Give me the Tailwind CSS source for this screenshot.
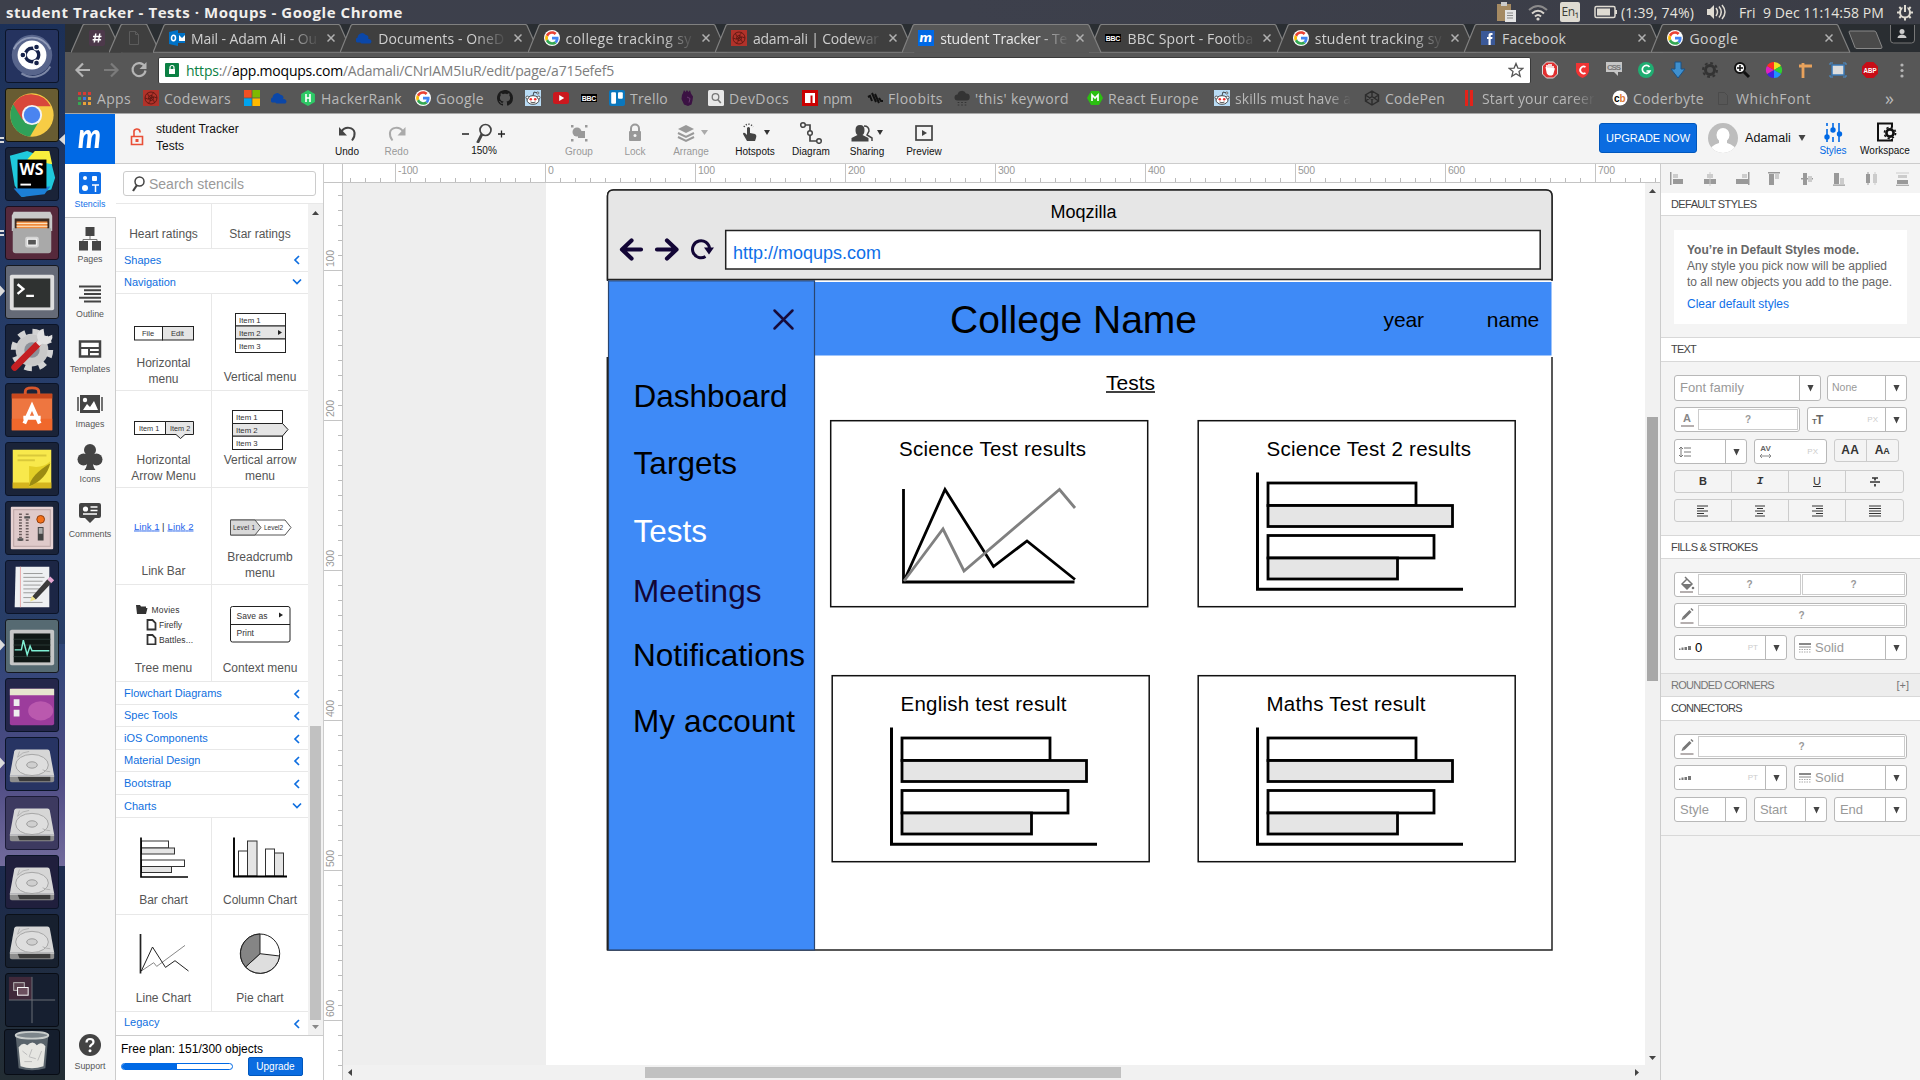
<!DOCTYPE html>
<html lang="en">
<head>
<meta charset="utf-8">
<title>student Tracker - Tests · Moqups</title>
<script src="https://cdn.jsdelivr.net/npm/@tailwindcss/browser@4"></script>
</head>
<body class="w-[1920px] h-[1080px] overflow-hidden flex flex-col bg-white font-['Liberation_Sans',Arial,sans-serif] text-black">

<!-- shared symbols -->
<svg class="hidden">
  <symbol id="i-google" viewBox="-4 -4 56 56"><circle cx="24" cy="24" r="28" fill="#fff"/><path fill="#EA4335" d="M24 9.5c3.54 0 6.71 1.22 9.21 3.6l6.85-6.85C35.9 2.38 30.47 0 24 0 14.62 0 6.51 5.38 2.56 13.22l7.98 6.19C12.43 13.72 17.74 9.5 24 9.5z"/><path fill="#4285F4" d="M46.98 24.55c0-1.57-.15-3.09-.38-4.55H24v9.02h12.94c-.58 2.96-2.26 5.48-4.78 7.18l7.73 6c4.51-4.18 7.09-10.36 7.09-17.65z"/><path fill="#FBBC05" d="M10.53 28.59c-.48-1.45-.76-2.99-.76-4.59s.27-3.14.76-4.59l-7.98-6.19C.92 16.46 0 20.12 0 24c0 3.88.92 7.54 2.56 10.78l7.97-6.19z"/><path fill="#34A853" d="M24 48c6.48 0 11.93-2.13 15.89-5.81l-7.73-6c-2.15 1.45-4.92 2.3-8.16 2.3-6.26 0-11.57-4.22-13.47-9.91l-7.98 6.19C6.51 42.62 14.62 48 24 48z"/></symbol>
  <symbol id="i-cloud" viewBox="0 0 16 16"><path fill="#0b47a8" d="M1 12.5a2.8 2.8 0 0 1 .6-5 4.500 4.500 0 0 1 7.900-2.800 3.600 3.600 0 0 1 3 3.800H8A3.500 3.500 0 0 0 4.500 12.500zM5.500 13.500a2.200 2.200 0 0 1 .5-4.200 3.400 3.400 0 0 1 6.300-.3 2.500 2.500 0 0 1 2 4.500z"/></symbol>
  <symbol id="i-codewars" viewBox="0 0 16 16"><rect width="16" height="16" fill="#b1322a"/><g fill="none" stroke="#5d1712" stroke-width=".9"><path d="M8 8q0-4 3-5.500M8 8q3.500-2 6 0M8 8q3.500 2 3.500 5M8 8q0 4-3 5.500M8 8q-3.500 2-6 0M8 8q-3.500-2-3.500-5"/><circle cx="8" cy="8" r="6"/><circle cx="8" cy="8" r="2.500"/></g></symbol>
  <symbol id="i-bbc" viewBox="0 0 16 16"><rect y="4" width="16" height="8" fill="#000"/><text x="0.800" y="11" font-size="7" font-weight="bold" fill="#fff" textLength="14.500" font-family="Liberation Sans">BBC</text></symbol>
  <symbol id="i-outlook" viewBox="0 0 16 16"><path fill="#0072c6" d="M0 2l9-2v16l-9-2z"/><path fill="#0072c6" d="M9 3h7v10H9z"/><path d="M10 5l3 3 3-3v6h-6z" fill="#fff"/><ellipse cx="4.500" cy="8" rx="2" ry="2.700" fill="none" stroke="#fff" stroke-width="1.500"/></symbol>
  <symbol id="i-moqups" viewBox="0 0 16 16"><rect width="16" height="16" fill="#0069e5"/><text x="1.500" y="12" font-size="14" font-weight="900" font-style="italic" fill="#fff" textLength="12.500" lengthAdjust="spacingAndGlyphs" font-family="Lato">m</text></symbol>
  <symbol id="i-facebook" viewBox="0 0 16 16"><rect x="1" y="1" width="14" height="14" fill="#3b5998"/><path fill="#fff" d="M8.500 15V9H7V7h1.500V5.500C8.500 3.700 9.500 3 11 3h1.500v2h-1c-.6 0-.8.3-.8.8V7h1.800l-.3 2h-1.500v6z"/></symbol>
  <symbol id="i-slack" viewBox="0 0 16 16"><rect width="16" height="16" rx="2" fill="#4d394b"/><path d="M6.800 3.500l-1.500 9M10.800 3.500l-1.500 9M4 6.500h8.500M3.600 9.800h8.500" stroke="#fff" stroke-width="1.500"/></symbol>
  <symbol id="i-page" viewBox="0 0 16 16"><path d="M3.500 1.500h6l3 3v10h-9zM9.500 1.500v3h3" fill="none" stroke="#5c5c5c"/></symbol>
  <symbol id="i-apps" viewBox="0 0 16 16"><path d="M2 2h3v3H2z M7 2h3v3H7z M12 2h3v3h-3z" fill="#d93a34"/><path d="M2 7h3v3H2z" fill="#36a852"/><path d="M7 7h3v3H7z" fill="#3b78e7"/><path d="M12 7h3v3h-3z" fill="#e8a13a"/><path d="M2 12h3v3H2z" fill="#36a852"/><path d="M7 12h3v3H7z" fill="#e8a13a"/><path d="M12 12h3v3h-3z" fill="#e8a13a"/></symbol>
  <symbol id="i-ms" viewBox="0 0 16 16"><path fill="#f25022" d="M0 0h7.600v7.600H0z"/><path fill="#7fba00" d="M8.400 0H16v7.600H8.400z"/><path fill="#00a4ef" d="M0 8.400h7.600V16H0z"/><path fill="#ffb900" d="M8.400 8.400H16V16H8.400z"/></symbol>
  <symbol id="i-hr" viewBox="0 0 16 16"><path fill="#2ec866" d="M8 0l6.900 4v8L8 16l-6.900-4V4z"/><path d="M6 4v8M10 4v8M6 8h4" stroke="#fff" stroke-width="1.600"/></symbol>
  <symbol id="i-github" viewBox="0 0 16 16"><path fill="#1b1b1b" d="M8 0C3.580 0 0 3.580 0 8c0 3.540 2.290 6.530 5.470 7.590.4.070.55-.17.55-.38 0-.19-.01-.82-.01-1.490-2.010.37-2.530-.49-2.690-.94-.09-.23-.48-.94-.82-1.130-.28-.15-.68-.52-.01-.53.63-.01 1.080.58 1.230.82.72 1.210 1.870.87 2.330.66.070-.52.28-.87.51-1.070-1.780-.2-3.640-.89-3.640-3.950 0-.87.31-1.590.82-2.150-.08-.2-.36-1.020.08-2.120 0 0 .67-.21 2.200.82.64-.18 1.320-.27 2-.27.68 0 1.360.09 2 .27 1.530-1.040 2.200-.82 2.200-.82.44 1.100.16 1.920.08 2.120.51.56.82 1.270.82 2.150 0 3.070-1.870 3.750-3.650 3.950.29.25.54.73.54 1.480 0 1.070-.01 1.930-.01 2.200 0 .21.15.46.55.38A8.013 8.013 0 0016 8c0-4.420-3.580-8-8-8z"/></symbol>
  <symbol id="i-reddit" viewBox="0 0 16 16"><rect width="16" height="16" fill="#b9dcf5"/><ellipse cx="8" cy="10" rx="6" ry="4.300" fill="#fff" stroke="#222" stroke-width=".8"/><circle cx="2.300" cy="7.500" r="1.400" fill="#fff" stroke="#222" stroke-width=".7"/><circle cx="13.700" cy="7.500" r="1.400" fill="#fff" stroke="#222" stroke-width=".7"/><circle cx="5.800" cy="9.300" r="1.300" fill="#e33"/><circle cx="10.200" cy="9.300" r="1.300" fill="#e33"/><path d="M5.500 12q2.500 1.500 5 0M8 5.500L9 2l3 .8" fill="none" stroke="#222" stroke-width=".8"/><circle cx="12.800" cy="3" r="1.100" fill="#fff" stroke="#222" stroke-width=".6"/></symbol>
  <symbol id="i-yt" viewBox="0 0 16 16"><rect y="2" width="16" height="12" rx="2.500" fill="#cc181e"/><path d="M6.200 5v6l5-3z" fill="#fff"/></symbol>
  <symbol id="i-trello" viewBox="0 0 16 16"><rect width="16" height="16" rx="2" fill="#0a77bd"/><rect x="2.200" y="2.200" width="4.800" height="11.500" rx="1" fill="#fff"/><rect x="9" y="2.200" width="4.800" height="6.500" rx="1" fill="#fff"/></symbol>
  <symbol id="i-pl" viewBox="0 0 16 16"><path fill="#3b1243" d="M3 3l1-3 1.500 2L7 0l1.300 2L10 .3l1 3.200 2 3-.5 4-1 4L8 16l-4-1.500L1.500 9 2 5z"/><path d="M7 7l3 1.500-1 4" stroke="#6b3a72" fill="none"/></symbol>
  <symbol id="i-devdocs" viewBox="0 0 16 16"><rect width="16" height="16" rx="1.500" fill="#e8e8e8"/><circle cx="7.500" cy="7" r="3.300" fill="none" stroke="#777" stroke-width="1.300"/><path d="M9.800 9.500l3 3.500" stroke="#777" stroke-width="1.600"/></symbol>
  <symbol id="i-npm" viewBox="0 0 16 16"><rect width="16" height="16" fill="#cb0000"/><path d="M3 3h10v10h-2.500V5.500h-2V13H3z" fill="#fff"/></symbol>
  <symbol id="i-floo" viewBox="0 0 16 16"><path d="M1 7l2-1 2 5M5 3l4 9M8 4l4 9M12 8l2 3 2 0" stroke="#111" stroke-width="2" fill="none"/></symbol>
  <symbol id="i-rain" viewBox="0 0 16 16"><path fill="#343434" d="M3.500 10.500a3 3 0 0 1 0-6A4.500 4.500 0 0 1 12 3.500a3.500 3.500 0 0 1 .5 7z"/><path d="M4.500 12v1M8 12v1M11.500 12v1M4.500 14.500v1M8 14.500v1M11.500 14.500v1" stroke="#343434" stroke-width="1.600"/></symbol>
  <symbol id="i-react" viewBox="0 0 16 16"><path fill="#2cbf12" d="M4 1h8l4 7-4 7H4L0 8z"/><path d="M5 11V5l3 3 3-3v6" fill="none" stroke="#fff" stroke-width="1.700"/></symbol>
  <symbol id="i-codepen" viewBox="0 0 16 16"><path d="M8 1l6.500 4v6L8 15l-6.500-4V5zM1.500 5L8 9.500 14.500 5M1.500 11L8 6.500l6.500 4.500M8 1v5.500M8 9.500V15" fill="none" stroke="#2c2c2c" stroke-width="1.400"/></symbol>
  <symbol id="i-red2" viewBox="0 0 16 16"><path d="M5.500 0v16M10.500 0v16" stroke="#e2231a" stroke-width="3"/></symbol>
  <symbol id="i-cb" viewBox="0 0 16 16"><circle cx="8" cy="8" r="7.500" fill="#fff"/><text x="2" y="11.500" font-size="10" font-weight="bold" font-family="Liberation Sans" textLength="6">c</text><text x="7.500" y="11.500" font-size="10" font-weight="bold" fill="#e07b39" font-family="Liberation Sans">b</text></symbol>
  <symbol id="i-none" viewBox="0 0 16 16"><path d="M3.500 2.500h6l3 3v9h-9z" fill="none" stroke="#4b4b4b"/></symbol>
  <symbol id="disk" viewBox="0 0 54 54"><path d="M11 12h32q2 0 2.500 2l4.500 25H4l4.500-25Q9 12 11 12z" fill="#d6d6d6"/><path d="M4 39h46v5q0 2-2 2H6q-2 0-2-2z" fill="#8e8e8e"/><path d="M12 40h34v5H14z" fill="#3b3b3b"/><path d="M4 39.500h46" stroke="#f5f5f5"/><ellipse cx="27" cy="28" rx="17" ry="11" fill="#dedede" stroke="#a3a3a3"/><ellipse cx="27" cy="28" rx="5.500" ry="3.300" fill="#cfcfcf" stroke="#999"/><path d="M14 14l-2 6q5-6 12-6M38 33q4 2 8 2" stroke="#b2b2b2" fill="none"/></symbol>
  <symbol id="chev-l" viewBox="0 0 8 10"><path d="M6 1L2 5l4 4" fill="none" stroke="#0f6fe0" stroke-width="1.700"/></symbol>
  <symbol id="chev-d" viewBox="0 0 10 8"><path d="M1 1.500l4 4 4-4" fill="none" stroke="#0f6fe0" stroke-width="1.700"/></symbol>
  <symbol id="caret" viewBox="0 0 8 8"><path d="M.5.500h7L4 8z" fill="#444"/></symbol>
  <symbol id="bars" viewBox="1255 470 212 122" overflow="visible">
    <g stroke="#000" stroke-width="2.800"><rect x="1268" y="483" width="148" height="22.500" fill="#fff"/><rect x="1268" y="505.500" width="184.500" height="21" fill="#e5e5e5"/><rect x="1268" y="535.500" width="166" height="22.500" fill="#fff"/><rect x="1268" y="558" width="129.500" height="21" fill="#e5e5e5"/><path d="M1257.500 472.500v116.800h205.500" fill="none" stroke-width="3"/></g>
  </symbol>
</svg>

<!-- system bar -->
<div class="h-6 shrink-0 flex items-center bg-linear-to-r from-[#3d404b] via-[#3d404c] to-[#3b3d46] text-[#e6e3de] font-['Open_Sans','Noto_Sans',sans-serif] text-[14px]">
  <div class="pl-1.5 w-[1496px]"><span class="font-bold text-[15px] text-[#f1efec] whitespace-nowrap" data-w="397">student Tracker - Tests · Moqups - Google Chrome</span></div>
  <svg class="w-5 h-5 mr-3" viewBox="0 0 20 20"><path d="M1 2h14v17H1z" fill="#a58a62"/><path d="M5 0h6v4H5z" fill="#ccc"/><path d="M9 8h11v12H9z" fill="#e4e4e4"/><path d="M11 11h6M11 13.500h6M11 16h6" stroke="#888"/></svg>
  <svg class="w-5 h-5 mr-3" viewBox="0 0 20 20"><g fill="none" stroke="#d9d5ce" stroke-width="2"><path d="M1 8q9-8 18 0" opacity=".5"/><path d="M4 11.500q6-5.500 12 0"/><path d="M7 14.500q3-3 6 0"/></g><circle cx="10" cy="17" r="1.600" fill="#d9d5ce"/></svg>
  <div class="w-5 h-5 mr-3.5 rounded-xs bg-[#dfdbd2] text-[#3c3b37] text-[12px] leading-5 text-center whitespace-nowrap"><span data-w="17">En₁</span></div>
  <svg class="w-6 h-4 mr-[3px]" viewBox="0 0 24 16"><rect x="1" y="2.500" width="20" height="11" rx="1.500" fill="none" stroke="#dfdbd2" stroke-width="1.500"/><rect x="3" y="4.500" width="13" height="7" fill="#dfdbd2"/><path d="M22 6v4" stroke="#dfdbd2" stroke-width="2"/></svg>
  <div class="w-[86px] whitespace-nowrap"><span data-w="73">(1:39, 74%)</span></div>
  <svg class="w-5 h-5 mr-3" viewBox="0 0 20 20"><path d="M0 7h3l4-4v14l-4-4H0z" fill="#dfdbd2"/><g fill="none" stroke="#dfdbd2" stroke-width="1.500"><path d="M9 6q3 4 0 8M12 4.500q4.500 5.500 0 11M15 3q6 7 0 14"/></g></svg>
  <div class="w-[157px] whitespace-nowrap"><span data-w="145">Fri&nbsp; 9 Dec 11:14:58 PM</span></div>
  <svg class="w-[18px] h-[18px]" viewBox="0 0 18 18"><circle cx="9" cy="9.500" r="5" fill="none" stroke="#dfdbd2" stroke-width="2"/><path d="M9 1v8" stroke="#3d404b" stroke-width="5"/><path d="M9 2v7" stroke="#dfdbd2" stroke-width="2"/><path d="M1 9.500h3M14 9.500h3M9 15v2.500M3.300 4l2 2M14.700 4l-2 2M3.300 15l2-2M14.700 15l-2-2" stroke="#dfdbd2" stroke-width="2"/></svg>
</div>

<div class="flex h-[1056px]">
<!-- launcher -->
<aside class="w-[65px] shrink-0 pt-[5px] flex flex-col items-center gap-[5px] bg-linear-to-b from-[#1c3057] via-[#2b4270] via-45% to-[#1c2c45] pr-[1px] relative">
  <div class="absolute inset-x-0 top-[620px] h-[222px] bg-linear-to-b from-[#2e4577] via-[#4f4c84] via-60% to-[#726b9c]"></div>
  <div class="absolute inset-x-0 top-[842px] bottom-0 bg-linear-to-b from-[#1d2b4f] to-[#232d33]"></div>
  <svg class="absolute left-0 top-0 w-[65px] h-[1056px]" viewBox="0 24 65 1056"><g fill="#dcdcdc"><path d="M0 138h4M0 142h4M0 231h4M0 235h4" stroke="#dcdcdc" stroke-width="2"/><path d="M65 134v11l-6-5.500zM0 285.500v11l5-5.500zM0 639.500v11l5-5.500zM0 757.500v11l5-5.500z"/></g></svg>
  <div class="relative w-[54px] h-[54px] shrink-0 rounded-[3px] border border-[#0b1428] bg-[#25335f] flex"><svg viewBox="0 0 54 54"><circle cx="27" cy="26" r="21" fill="#6d7aa0" opacity=".7"/><path d="M8 20a21 21 0 0 1 38 0M46 38a21 21 0 0 1-30 7" stroke="#b7bfd6" stroke-width="2" fill="none" opacity=".6"/><circle cx="27" cy="26" r="15" fill="#fff"/><circle cx="27" cy="26" r="7" fill="none" stroke="#16224a" stroke-width="3.500"/><g fill="#16224a" stroke="#fff" stroke-width="1.200"><circle cx="17.500" cy="26" r="3"/><circle cx="31.700" cy="17.700" r="3"/><circle cx="31.700" cy="34.300" r="3"/></g></svg></div>
  <div class="relative w-[54px] h-[54px] shrink-0 rounded-[3px] border border-[#14140c] bg-[#685c32] flex"><svg viewBox="0 0 54 54"><circle cx="27" cy="27" r="22.500" fill="#f7cc45"/><path d="M27 27L7.500 15.800A22.500 22.500 0 0 0 25 49.400L34 34z" fill="#2fa159"/><path d="M27 18h19.500A22.500 22.500 0 0 0 7.500 15.800L17 32z" fill="#d8473b"/><circle cx="27" cy="27" r="10.500" fill="#f3f3f3"/><circle cx="27" cy="27" r="8.500" fill="#4a84f0"/></svg></div>
  <div class="relative w-[54px] h-[54px] shrink-0 rounded-[3px] border border-[#0b1428] bg-[#1a2338] flex"><svg viewBox="0 0 54 54"><path d="M4 8l18-5 8 3 14-3 7 28-4 12-30 8-8-12z" fill="#1fc9dc"/><path d="M22 12L30 3l15 0 3 14z" fill="#f7ee3d"/><path d="M8 42l8 9 24-3 6-8z" fill="#1c7fd6"/><rect x="12" y="12" width="30" height="30" fill="#000"/><path d="M15 38h11" stroke="#fff" stroke-width="2"/><text x="14" y="28" font-size="16" font-weight="bold" fill="#fff" textLength="25" lengthAdjust="spacingAndGlyphs" font-family="Open Sans">WS</text></svg></div>
  <div class="relative w-[54px] h-[54px] shrink-0 rounded-[3px] border border-[#1b1020] bg-[#56293b] flex"><svg viewBox="0 0 54 54"><path d="M8 5h38l2 4v16H6V9z" fill="#c9c9c9"/><path d="M9 12h36v14H9z" fill="#3a2a22"/><path d="M11 15h32v9H11z" fill="#f08b3d"/><path d="M11 17h32M11 20h32" stroke="#fff3da"/><path d="M7 22h40v23q0 3-3 3H10q-3 0-3-3z" fill="#a9a9a9"/><rect x="20" y="31" width="14" height="11" rx="2" fill="#d5d5d5"/><rect x="22.500" y="33.500" width="9" height="6" fill="#555" stroke="#fff"/></svg></div>
  <div class="relative w-[54px] h-[54px] shrink-0 rounded-[3px] border border-[#15181f] bg-[#656a77] flex"><svg viewBox="0 0 54 54"><rect x="4" y="9" width="46" height="37" rx="2" fill="#dedede"/><rect x="8" y="13" width="38" height="30" fill="#2f3231"/><path d="M12 19l6 5-6 5M21 31h8" fill="none" stroke="#fff" stroke-width="2.500"/></svg></div>
  <div class="relative w-[54px] h-[54px] shrink-0 rounded-[3px] border border-[#0b1428] bg-[#1a2338] flex"><svg viewBox="0 0 54 54"><circle cx="27" cy="26" r="17" fill="#c9c9c9"/><circle cx="27" cy="26" r="19" fill="none" stroke="#d3d3d3" stroke-width="6" stroke-dasharray="7.500 7.400"/><circle cx="27" cy="26" r="8" fill="#8c9098"/><path d="M9 44L32 21" stroke="#c41f22" stroke-width="7" stroke-linecap="round"/><path d="M33 20l6-6" stroke="#e6e6e6" stroke-width="5"/><path d="M48 10a8 8 0 1 1-9-6l1 7 4 1z" fill="#e2e2e2"/></svg></div>
  <div class="relative w-[54px] h-[54px] shrink-0 rounded-[3px] border border-[#0b1428] bg-[#1a2338] flex"><svg viewBox="0 0 54 54"><path d="M20 14V8q0-4 7-4t7 4v6" fill="none" stroke="#d9572c" stroke-width="3"/><path d="M6 10h42v38H6z" fill="#ee7640"/><path d="M6 10h42v5H6z" fill="#c9481d"/><path d="M6 36h42v12H6z" fill="#f0682c"/><path d="M19 41l8-18 8 18M18 35h18" fill="none" stroke="#fff" stroke-width="4"/></svg></div>
  <div class="relative w-[54px] h-[54px] shrink-0 rounded-[3px] border border-[#0b1428] bg-[#1a2338] flex"><svg viewBox="0 0 54 54"><path d="M7 7h40v40H7z" fill="#f8e94c"/><path d="M7 41h40v6H7z" fill="#d5b51e"/><path d="M12 13h30M12 18h18" stroke="#d9c93a" stroke-width="2"/><path d="M24 46V24q14 3 22-5Q42 36 24 46z" fill="#e4cf27"/><path d="M24 45q2-12 22-24Q42 38 24 45z" fill="#9c8b12"/></svg></div>
  <div class="relative w-[54px] h-[54px] shrink-0 rounded-[3px] border border-[#0b1428] bg-[#1a2338] flex"><svg viewBox="0 0 54 54"><rect x="5" y="5" width="44" height="44" rx="1" fill="#e6d2d2"/><rect x="8" y="8" width="38" height="38" fill="#dfcaca" stroke="#b9a3a3"/><path d="M15 12v30M22 12v30" stroke="#6a5c5c" stroke-dasharray="1.500 1.500" stroke-width="3"/><path d="M12 39h6M19 16h6" stroke="#555" stroke-width="2.500"/><circle cx="36" cy="18" r="4" fill="#f3711c" stroke="#8b3a0a"/><rect x="33" y="26" width="6" height="14" fill="#444"/><rect x="34" y="27" width="4" height="6" fill="#aaa"/></svg></div>
  <div class="relative w-[54px] h-[54px] shrink-0 rounded-[3px] border border-[#0b1428] bg-[#1c2645] flex"><svg viewBox="0 0 54 54"><path d="M10 6h35v42H9z" fill="#eef0f2"/><path d="M15 6v42" stroke="#e8a9a9"/><path d="M18 13h20M18 17h22M18 21h20M18 25h18M18 29h18M18 33h14M18 38h12M18 43h20" stroke="#999"/><path d="M27 37l16-18 4 4-16 17z" fill="#3b3b3b"/><path d="M43 19l3-3 4 4-3 3z" fill="#e7a9d3"/><path d="M25 42l2-6 4 4z" fill="#efe48c"/></svg></div>
  <div class="relative w-[54px] h-[54px] shrink-0 rounded-[3px] border border-[#15181f] bg-[#566a72] flex"><svg viewBox="0 0 54 54"><rect x="4" y="10" width="46" height="37" rx="2" fill="#c6c6c6"/><rect x="8" y="14" width="38" height="30" fill="#101816"/><path d="M8 20h38M8 26h38M8 38h38" stroke="#2c3a36"/><path d="M9 31h7l2-10 4 15 3-9 2 5h18" fill="none" stroke="#7ff0d4" stroke-width="1.500"/></svg></div>
  <div class="relative w-[54px] h-[54px] shrink-0 rounded-[3px] border border-[#0b1428] bg-[#24264a] flex"><svg viewBox="0 0 54 54"><rect x="4" y="10" width="46" height="38" rx="2" fill="#9c3c9c"/><ellipse cx="36" cy="33" rx="13" ry="10" fill="#c765b7" opacity=".7"/><path d="M4 10h46v7H4z" fill="#e7e6cf"/><path d="M8 21h6v7H8zM8 32h6v7H8z" fill="#eee"/></svg></div>
  <div class="relative w-[54px] h-[54px] shrink-0 rounded-[3px] border border-[#0b1428] bg-[#273463] flex"><svg><use href="#disk"/></svg></div>
  <div class="relative w-[54px] h-[54px] shrink-0 rounded-[3px] border border-[#1c1c38] bg-[#3d3a60] flex"><svg><use href="#disk"/></svg></div>
  <div class="relative w-[54px] h-[54px] shrink-0 rounded-[3px] border border-[#0b1428] bg-[#201f3d] flex"><svg><use href="#disk"/></svg></div>
  <div class="relative w-[54px] h-[54px] shrink-0 rounded-[3px] border border-[#0b1018] bg-[#17202f] flex"><svg><use href="#disk"/></svg></div>
  <div class="relative w-[54px] h-[54px] shrink-0 rounded-[3px] border border-[#080c14] bg-[#161f30] flex"><svg viewBox="0 0 54 54"><path d="M3 3h24v24H3z" fill="#40293a"/><path d="M3 27h48M27 3v48" stroke="#6c7079"/><rect x="8" y="9" width="11" height="8" fill="#5b4350" stroke="#bbb"/><rect x="12" y="14" width="11" height="8" fill="#6c4f5e" stroke="#fff"/></svg></div>
  <div class="relative w-[56px] h-[46px] -mt-[3px] shrink-0 rounded-[3px] border border-[#080c14] bg-[#151e2d] flex"><svg viewBox="0 0 56 46"><path d="M11 6l3 34q14 4 28 0l3-34z" fill="#59636b"/><path d="M14 18q5-6 9-2 6-6 10 0 5-5 9 1l-2 21q-12 4-24 0z" fill="#e6e6e2"/><path d="M18 22l5 4M28 20l-3 8 7 2M38 22l-4 10M20 33h8" stroke="#bbb" fill="none"/><ellipse cx="28" cy="5.500" rx="17" ry="3.500" fill="#7d868c" stroke="#c8cccb" stroke-width="2"/></svg></div>
</aside>

<main class="flex-1 min-w-0 flex flex-col">
  <!-- browser tabs -->
  <div class="h-[29px] shrink-0 flex bg-[#2a2e32] border-b border-[#575757] font-['Open_Sans','Noto_Sans',sans-serif] text-[14px] text-[#cfcfcf]">
    <div class="flex w-full pl-[6px]" id="tabs"></div>
  </div>

  <!-- address bar -->
  <div class="h-[31px] shrink-0 bg-[#575757] flex items-center pt-[5px] -mt-px">
    <svg class="w-[93px] h-[26px] shrink-0" viewBox="65 58 93 26"><g fill="none" stroke-width="2.200"><path d="M90 71H77M83 64.500L76.500 71l6.500 6.500" stroke="#b5b5b5"/><path d="M104 71h13M111 64.500l6.500 6.500-6.500 6.500" stroke="#7b7b7b"/><path d="M144.500 67a6.500 6.500 0 1 0 1 4.500" stroke="#b5b5b5"/></g><path d="M146.500 63v7h-7z" fill="#b5b5b5"/></svg>
    <div class="w-[1373px] shrink-0 h-[27px] bg-white border border-[#3a3a3a] rounded-xs flex items-center pl-1.5 pr-1.5 font-['Open_Sans','Noto_Sans',sans-serif] text-[14px] text-[#7d7d7d]">
      <svg class="w-3.5 h-3.5 mr-[7px]" viewBox="0 0 14 14"><rect width="14" height="14" rx="1" fill="#0b8043"/><rect x="4" y="6" width="6" height="5" fill="#fff"/><path d="M5 6V4.500a2 2 0 0 1 4 0V6" stroke="#fff" fill="none" stroke-width="1.200"/></svg>
      <span class="whitespace-nowrap" data-w="428"><span class="text-[#0b8043]">https</span>://<span class="text-black">app.moqups.com</span>/Adamali/CNrIAM5IuR/edit/page/a715efef5</span>
      <svg class="w-4 h-4 ml-auto" viewBox="0 0 16 16"><path d="M8 1.500l1.900 4.600 4.900.3-3.800 3.200 1.200 4.800L8 11.700l-4.200 2.700L5 9.600 1.200 6.400l4.900-.3z" fill="none" stroke="#555" stroke-width="1.300"/></svg>
    </div>
    <svg class="w-[389px] h-[26px]" viewBox="1531 58 389 26">
      <g><path d="M1546.500 63h7l4 4v8l-4 4h-7l-4-4v-8z" fill="#e03030" stroke="#ddd"/><path d="M1547 70v-4M1549 70v-5M1551 70v-5M1553 71v-4M1546.500 69l1 5q2 3 5 1l1.500-5z" stroke="#fff" stroke-width="1.600" fill="#fff"/></g>
      <path d="M1576 64h13v8q-1 5-6.500 7-5.500-2-6.500-7z" fill="#f03434"/><path d="M1585.500 68a3.500 3.500 0 1 0 0 6" fill="none" stroke="#fff" stroke-width="1.800"/>
      <path d="M1606 63h16v10h-4v4l-4-4h-8z" fill="#c6c6c6"/><text x="1607" y="71" font-size="8" font-weight="bold" fill="#777" textLength="14" font-family="Liberation Sans">CSS</text>
      <circle cx="1646" cy="71" r="8" fill="#1fae72"/><path d="M1649.500 68a4 4 0 1 0 .5 4h-3.500" fill="none" stroke="#fff" stroke-width="1.700"/>
      <path d="M1675 63h6v7h4l-7 9-7-9h4z" fill="#3f90cf" stroke="#1a5286"/>
      <circle cx="1710" cy="71" r="4.500" fill="none" stroke="#333" stroke-width="3"/><circle cx="1710" cy="71" r="7" fill="none" stroke="#333" stroke-width="2" stroke-dasharray="2.800 2.700"/>
      <circle cx="1740" cy="69" r="5" fill="#fff" stroke="#111" stroke-width="2"/><path d="M1740 66v6M1737 69h6" stroke="#111" stroke-width="1.500"/><path d="M1744 73l5 5" stroke="#111" stroke-width="3"/>
      <g><path d="M1774 71V63a8 8 0 0 1 7 4z" fill="#f0e020"/><path d="M1774 71l7-4a8 8 0 0 1 0 8z" fill="#30d030"/><path d="M1774 71l7 4a8 8 0 0 1-7 4z" fill="#2090ff"/><path d="M1774 71v8a8 8 0 0 1-7-4z" fill="#4020e0"/><path d="M1774 71l-7 4a8 8 0 0 1 0-8z" fill="#e020c0"/><path d="M1774 71l-7-4a8 8 0 0 1 7-4z" fill="#ff3020"/></g>
      <path d="M1799 67h13M1803 64v15" stroke="#e8a25c" stroke-width="2.800"/>
      <rect x="1832" y="66" width="12" height="10" fill="#ddd" stroke="#3a7ab8" stroke-width="1.500"/><path d="M1830 66v-2h3M1846 66v-2h-3M1830 76v2h3M1846 76v2h-3" stroke="#4a90d0" fill="none"/>
      <path d="M1866.500 63h7l4.500 4.500v7l-4.500 4.500h-7l-4.500-4.500v-7z" fill="#c70d17"/><text x="1863.500" y="74" font-size="8" font-weight="bold" fill="#fff" textLength="13" lengthAdjust="spacingAndGlyphs" font-family="Liberation Sans">ABP</text>
      <g fill="#b5b5b5"><circle cx="1902" cy="66" r="1.600"/><circle cx="1902" cy="71.500" r="1.600"/><circle cx="1902" cy="77" r="1.600"/></g>
    </svg>
  </div>

  <!-- bookmarks -->
  <div id="bookmarks" class="h-[31px] shrink-0 bg-[#575757] border-b border-[#a8a8a8] flex items-center pl-[11px] font-['Open_Sans','Noto_Sans',sans-serif] text-[14px] text-[#b9b9b9]"></div>

  <!-- editor header -->
  <header class="h-[50px] shrink-0 bg-[#f4f4f4] border-b border-[#ccc] flex text-[10px] text-[#111]">
    <div class="w-[50px] h-[50px] bg-[#0069e5] grid place-items-center text-white font-['Lato','Liberation_Sans',sans-serif] font-black italic text-[34px] leading-none"><span class="-mt-2 scale-x-[.85]">m</span></div>
    <svg class="w-[14px] h-[18px] ml-[15px] mt-[14px]" viewBox="0 0 14 18"><path d="M1.500 8.500h11v8h-11zM4 8.500V4.500a3 3 0 0 1 6-1v1" fill="none" stroke="#e94f37" stroke-width="1.600"/><rect x="5.500" y="11" width="3" height="3" fill="#e94f37"/></svg>
    <div class="ml-[12px] w-[166px] pt-[7px] text-[12px] leading-[17px] whitespace-nowrap"><div>student Tracker</div><div>Tests</div></div>

    <div class="w-[50px] flex flex-col items-center"><svg class="w-[22px] h-[30px]" viewBox="336 114 22 30"><path d="M341.500 131.500c4-6 12-4 13 1 .5 3-.5 5.500-2.500 8" fill="none" stroke="#444" stroke-width="2"/><path d="M339 127v8.500h8z" fill="#444"/></svg><span class="leading-[15px]">Undo</span></div>
    <div class="w-[49px] flex flex-col items-center text-[#999]"><svg class="w-[22px] h-[30px]" viewBox="336 114 22 30"><path d="M353 131.500c-4-6-12-4-13 1-.5 3 .5 5.500 2.500 8" fill="none" stroke="#aaa" stroke-width="2"/><path d="M355.500 127v8.500h-8z" fill="#aaa"/></svg><span class="leading-[15px]">Redo</span></div>
    <div class="ml-[33px] w-[60px] flex flex-col items-center"><svg class="w-[60px] h-[29px]" viewBox="454 114 60 29"><circle cx="485.500" cy="130" r="5.500" fill="none" stroke="#444" stroke-width="1.700"/><path d="M482 134l-4.500 9" stroke="#444" stroke-width="2.800"/><path d="M462 134h7M498 134h7M501.500 130.500v7" stroke="#222" stroke-width="1.300"/></svg><span class="leading-[15px]">150%</span></div>
    <div class="ml-[37px] w-14 flex flex-col items-center text-[#999]"><svg class="w-5 h-[30px]" viewBox="0 0 20 30"><g fill="#999"><circle cx="8" cy="18" r="4.500"/><rect x="9" y="17" width="7" height="7"/><path d="M2 11h2.500v2.500H2zM16 11h2.500v2.500H16zM2 25h2.500v2.500H2zM16 25h2.500v2.500H16z"/></g></svg><span class="leading-[15px]">Group</span></div>
    <div class="w-14 flex flex-col items-center text-[#999]"><svg class="w-5 h-[30px]" viewBox="0 0 20 30"><rect x="4" y="17" width="12" height="10" rx="1" fill="#999"/><path d="M6 17v-2.500a4 4 0 0 1 8 0V17" fill="none" stroke="#999" stroke-width="2"/><circle cx="10" cy="21.500" r="1.500" fill="#f4f4f4"/></svg><span class="leading-[15px]">Lock</span></div>
    <div class="w-14 flex flex-col items-center text-[#999]"><svg class="w-9 h-[30px]" viewBox="0 0 36 30"><path d="M13 11l8 4-8 4-8-4z" fill="#999"/><path d="M5 19l8 4 8-4M5 23l8 4 8-4" fill="none" stroke="#999" stroke-width="2"/><path d="M28 16h7l-3.500 5z" fill="#aaa"/></svg><span class="leading-[15px]">Arrange</span></div>
    <div class="ml-1 w-16 flex flex-col items-center"><svg class="w-9 h-[30px]" viewBox="0 0 36 30"><path d="M10 27l-4-7q0-2 2-1l2 2v-7q1.500-2 3 0v5l5 1q2 1 1 4l-1 3z" fill="#444"/><path d="M7 13a5 5 0 0 1 9 0" fill="none" stroke="#444" stroke-width="1.500" stroke-dasharray="1.200 1.500"/><path d="M27 16h6l-3 5z" fill="#333"/></svg><span class="leading-[15px]">Hotspots</span></div>
    <div class="w-12 flex flex-col items-center"><svg class="w-6 h-[30px]" viewBox="0 0 24 30"><path d="M6 11h5v16h7" fill="none" stroke="#444" stroke-width="1.700"/><g fill="#f4f4f4" stroke="#444" stroke-width="1.500"><circle cx="4" cy="11" r="2.300"/><circle cx="11" cy="19" r="2.300"/><circle cx="20" cy="27" r="2.300"/></g></svg><span class="leading-[15px]">Diagram</span></div>
    <div class="w-16 flex flex-col items-center"><svg class="w-9 h-[30px]" viewBox="0 0 36 30"><path d="M15 12q5 0 5 5l-2 4 5 3v3" fill="none" stroke="#444" stroke-width="1.500"/><path d="M11 11q4.500 0 4.500 5 0 4-2 5l6 3v3.500h-17V24l6-3q-2-1-2-5 0-5 4.500-5z" fill="#444"/><path d="M28 16h6l-3 5z" fill="#333"/></svg><span class="leading-[15px]">Sharing</span></div>
    <div class="w-[50px] flex flex-col items-center"><svg class="w-5 h-[30px]" viewBox="0 0 20 30"><rect x="2" y="12" width="16" height="14" fill="none" stroke="#444" stroke-width="1.700"/><path d="M8 16v6l5-3z" fill="#444"/></svg><span class="leading-[15px]">Preview</span></div>

    <div class="ml-auto mt-[9px] w-[98px] h-[30px] rounded-[3px] border border-[#0057bd] bg-[#0b6ce0] text-white text-[11px] leading-7 text-center whitespace-nowrap"><span data-w="84">UPGRADE NOW</span></div>
    <svg class="ml-[11px] mt-[9px] w-[30px] h-[30px]" viewBox="0 0 30 30"><defs><clipPath id="av"><circle cx="15" cy="15" r="15"/></clipPath></defs><circle cx="15" cy="15" r="15" fill="#bdbdbd"/><g clip-path="url(#av)" fill="#fff"><ellipse cx="15" cy="12" rx="6.500" ry="7"/><path d="M11 16h8v4q9 2 9 10H2q0-8 9-10z"/></g></svg>
    <div class="ml-[7px] w-[53px] mt-[15px] text-[12.500px] leading-[18px]"><span data-w="46">Adamali</span></div>
    <svg class="w-[8px] h-[6px] mt-[21px] mr-[3px]" viewBox="0 0 8 6"><path d="M.5 0h7L4 6z" fill="#444"/></svg>
    <div class="w-12 flex flex-col items-center text-[#0069e5]"><svg class="w-5 h-[29px]" viewBox="0 0 20 29"><path d="M4 9v3M4 15v13M10 9v8M10 23v5M16 9v10M16 22v6" stroke="#0069e5" stroke-width="1.600"/><g fill="#0069e5"><circle cx="4" cy="23" r="2.700"/><circle cx="10" cy="16" r="2.700"/><circle cx="16.500" cy="20" r="2.700"/></g></svg><span class="leading-[15px]">Styles</span></div>
    <div class="w-14 mr-[7px] flex flex-col items-center"><svg class="w-6 h-[29px]" viewBox="0 0 24 29"><path d="M19 13V9.500H5v17h14V25" fill="none" stroke="#111" stroke-width="2"/><circle cx="17" cy="19" r="3.600" fill="none" stroke="#111" stroke-width="2.600"/><circle cx="17" cy="19" r="5.600" fill="none" stroke="#111" stroke-width="1.600" stroke-dasharray="2.200 2.200"/></svg><span class="leading-[15px]">Workspace</span></div>
  </header>

  <div class="flex flex-1 min-h-0">
    <!-- icon rail -->
    <nav class="w-[51px] shrink-0 flex flex-col bg-[#f8f8f8] text-[8.800px] text-[#555] text-center leading-3 border-r border-[#ccc]">
      <div class="h-[54px] -mr-px bg-white border-b border-[#ccc] text-[#0f6fe8] flex flex-col items-center justify-end pb-[7px] pr-px"><svg class="w-[22px] h-[22px] mb-[4px]" viewBox="0 0 22 22"><rect width="22" height="22" rx="2" fill="#0f6fe8"/><circle cx="6" cy="6" r="2" fill="#fff"/><rect x="13" y="4" width="5" height="5" rx="1" fill="#fff"/><circle cx="6" cy="16" r="3" fill="#fff"/><path d="M13 13h7M16.500 13v7" stroke="#fff" stroke-width="1.500"/></svg>Stencils</div>
      <div class="h-[47px] flex flex-col items-center justify-end"><svg class="w-6 h-6 mb-[2px]" viewBox="0 0 24 24"><path d="M12 9v3M5 15v-2.500h14V15" fill="none" stroke="#777"/><path d="M7.500 0h9v9h-9zM1 14h9v9.500H1zM14 14h9v9.500h-9z" fill="#444"/></svg>Pages</div>
      <div class="h-[55px] flex flex-col items-center justify-end"><svg class="w-6 h-[18px] mb-[5px]" viewBox="0 0 24 18"><path d="M1 1.500h22M6 5.300h17M6 9h17M1 12.800h22M6 16.500h17" stroke="#444" stroke-width="2"/></svg>Outline</div>
      <div class="h-[55px] flex flex-col items-center justify-end"><svg class="w-6 h-[18px] mb-[5px]" viewBox="0 0 24 18"><rect x="2" y="1.500" width="20" height="15" fill="#fff" stroke="#444" stroke-width="2.500"/><path d="M2 8h20M11 8v8M11 12h11" stroke="#444" stroke-width="2"/></svg>Templates</div>
      <div class="h-[55px] flex flex-col items-center justify-end"><svg class="w-[26px] h-[18px] mb-[5px]" viewBox="0 0 26 18"><rect x="3" y="0" width="20" height="18" fill="#444"/><path d="M1 2v14M25 2v14" stroke="#444" stroke-width="1.500"/><circle cx="8" cy="5" r="2.200" fill="#fff"/><path d="M6 15l4-6 3 3 4-6 4 9z" fill="#fff"/></svg>Images</div>
      <div class="h-[55px] flex flex-col items-center justify-end"><svg class="w-[26px] h-[26px] mb-[3px]" viewBox="0 0 26 26"><g fill="#444"><circle cx="13" cy="6" r="6"/><circle cx="6.500" cy="15.500" r="6"/><circle cx="19.500" cy="15.500" r="6"/><path d="M10 10h6v4q-1 8 2.500 12h-11Q11 22 10 14z"/></g></svg>Icons</div>
      <div class="h-[55px] flex flex-col items-center justify-end"><svg class="w-[22px] h-5 mb-[5px]" viewBox="0 0 22 20"><path d="M2 0h18q2 0 2 2v11q0 2-2 2h-4l-5 5-5-5H2q-2 0-2-2V2q0-2 2-2z" fill="#444"/><circle cx="6.500" cy="6" r="2.600" fill="#fff"/><path d="M11.500 4h7M11.500 7.500h7M4 11h14" stroke="#fff" stroke-width="1.500"/></svg>Comments</div>
      <div class="mt-auto mb-2 flex flex-col items-center"><svg class="w-[22px] h-[22px] mb-1" viewBox="0 0 22 22"><circle cx="11" cy="11" r="11" fill="#444"/><path d="M7.500 8.500q0-3.500 3.500-3.500t3.500 3q0 1.800-2 2.800-1.500.8-1.500 2.500" fill="none" stroke="#fff" stroke-width="2.200"/><circle cx="11" cy="16.800" r="1.500" fill="#fff"/></svg>Support</div>
    </nav>

    <!-- stencils -->
    <section class="w-[208px] shrink-0 flex flex-col border-r border-[#ccc] bg-white">
      <div class="h-10 shrink-0 pl-[7px] pt-[7px] border-b border-[#e8e8e8]">
        <div class="w-[193px] h-[25px] border border-[#ccc] rounded-[3px] flex items-center pl-[7px] text-[14px] text-[#999]"><svg class="w-[14px] h-4 mr-[4px]" viewBox="0 0 14 16"><circle cx="8.500" cy="5.500" r="4.500" fill="none" stroke="#444" stroke-width="1.500"/><path d="M6 9l-4 6" stroke="#444" stroke-width="2.200"/></svg><span class="pt-px">Search stencils</span></div>
      </div>
      <div class="flex flex-1 min-h-0">
        <div class="w-48 text-[12px] leading-4 text-[#555] text-center">
          <div class="grid grid-cols-2 h-[45px] border-b border-[#e8e8e8]"><div class="border-r border-[#e8e8e8] pt-[22px]">Heart ratings</div><div class="pt-[22px]">Star ratings</div></div>
          <div class="h-[23px] border-b border-[#e8e8e8] flex items-center justify-between pl-2 pr-[7px] pb-px text-[11px] text-[#0f6fe0]"><span>Shapes</span><svg class="w-2 h-2.5 mt-px"><use href="#chev-l"/></svg></div>
          <div class="h-[22px] border-b border-[#e8e8e8] flex items-center justify-between pl-2 pr-[6px] pb-px text-[11px] text-[#0f6fe0]"><span>Navigation</span><svg class="w-2.5 h-2"><use href="#chev-d"/></svg></div>
          <div class="grid grid-cols-2 auto-rows-[97px]">
            <div class="border-r border-b border-[#e8e8e8]"><svg class="w-24 h-15 mb-px" viewBox="0 0 96 60" font-size="7.500" fill="#333"><rect x="18.500" y="32.500" width="28" height="13.500" fill="#fff" stroke="#222"/><rect x="46.500" y="32.500" width="31" height="13.500" fill="#e5e5e5" stroke="#222"/><text x="26" y="42">File</text><text x="55" y="42">Edit</text></svg><div>Horizontal<br>menu</div></div>
            <div class="border-b border-[#e8e8e8]"><svg class="w-24 h-15 mb-px" viewBox="0 0 96 60" font-size="7.800" fill="#333"><g stroke="#222"><rect x="23.500" y="19.500" width="50" height="12.500" fill="#fff"/><rect x="23.500" y="32" width="50" height="13" fill="#e5e5e5"/><rect x="23.500" y="45" width="50" height="13.500" fill="#fff"/></g><path d="M66 36v5l4-2.500z" fill="#222"/><text x="27" y="28.500">Item 1</text><text x="27" y="41.500">Item 2</text><text x="27" y="55">Item 3</text></svg><div class="pt-[14px]">Vertical menu</div></div>
            <div class="border-r border-b border-[#e8e8e8]"><svg class="w-24 h-15 mb-px" viewBox="0 0 96 60" font-size="7.300" fill="#333"><rect x="18.500" y="30.500" width="31" height="13" fill="#fff" stroke="#222"/><path d="M49.500 30.500h28v13H69l-4.500 4-4.500-4H49.500z" fill="#e5e5e5" stroke="#222"/><text x="23" y="39.700">Item 1</text><text x="54" y="39.700">Item 2</text></svg><div>Horizontal<br>Arrow Menu</div></div>
            <div class="border-b border-[#e8e8e8]"><svg class="w-24 h-15 mb-px" viewBox="0 0 96 60" font-size="7.800" fill="#333"><g stroke="#222"><rect x="20.500" y="19.500" width="50" height="13" fill="#fff"/><rect x="20.500" y="45" width="50" height="13.500" fill="#fff"/><path d="M20.500 32.500h50l5.500 6-5.500 6.500h-50z" fill="#e5e5e5"/></g><text x="24" y="28.500">Item 1</text><text x="24" y="42">Item 2</text><text x="24" y="55">Item 3</text></svg><div>Vertical arrow<br>menu</div></div>
            <div class="border-r border-b border-[#e8e8e8]"><svg class="w-24 h-15 mb-px" viewBox="0 0 96 60" font-size="9.500" fill="#2563eb"><text x="18" y="41.500" textLength="25.500" text-decoration="underline">Link 1</text><text x="46" y="41.500" fill="#333">|</text><text x="51.500" y="41.500" textLength="26" text-decoration="underline">Link 2</text></svg><div class="pt-[14px]">Link Bar</div></div>
            <div class="border-b border-[#e8e8e8]"><svg class="w-24 h-15 mb-px" viewBox="0 0 96 60" font-size="6.500" fill="#333"><path d="M18.500 32H73l6 7.500-6 7.500H18.500z" fill="#fff" stroke="#555"/><path d="M18.500 32H43l6 7.500-6 7.500H18.500z" fill="#d9d9d9" stroke="#555"/><text x="21" y="41.500" textLength="22">Level 1</text><text x="52" y="41.500" textLength="19">Level2</text></svg><div>Breadcrumb<br>menu</div></div>
            <div class="border-r border-b border-[#e8e8e8]"><svg class="w-24 h-15 mb-px" viewBox="0 0 96 60" font-size="8.500" fill="#333"><path d="M20 20h4l1 1.500h5V23h1.500L30 29H21z"/><text x="35.500" y="27.700" textLength="28">Movies</text><text x="43" y="42.700" textLength="23">Firefly</text><text x="43" y="57.700" textLength="34">Battles...</text><path d="M31.500 35h5l3 3v6.500h-8zM31.500 50h5l3 3v6.500h-8z" fill="#fff" stroke="#333" stroke-width="1.800"/></svg><div class="pt-[14px]">Tree menu</div></div>
            <div class="border-b border-[#e8e8e8]"><svg class="w-24 h-15 mb-px" viewBox="0 0 96 60" font-size="8.500" fill="#333"><rect x="18.500" y="21.500" width="59.500" height="35.500" rx="2" fill="#fff" stroke="#222"/><path d="M18.500 39.500h59.500" stroke="#222"/><path d="M67 27.500v5l4-2.500z" fill="#222"/><text x="24.500" y="34" textLength="31">Save as</text><text x="24.500" y="50.500">Print</text></svg><div class="pt-[14px]">Context menu</div></div>
          </div>
          <div id="groups"></div>
          <div class="h-[23px] border-b border-[#e8e8e8] flex items-center justify-between pl-2 pr-[6px] text-[11px] text-[#0f6fe0]"><span>Charts</span><svg class="w-2.5 h-2"><use href="#chev-d"/></svg></div>
          <div class="grid grid-cols-2 auto-rows-[97px]">
            <div class="border-r border-b border-[#e8e8e8]"><svg class="w-24 h-15" viewBox="0 0 96 60"><g stroke="#333"><rect x="25.500" y="23" width="27" height="7" fill="#fff"/><rect x="25.500" y="30" width="33" height="6" fill="#e5e5e5"/><rect x="25.500" y="42" width="43" height="6.500" fill="#fff"/><rect x="25.500" y="48.500" width="30" height="6" fill="#e5e5e5"/></g><path d="M25 19.500V59h47" fill="none" stroke="#000" stroke-width="1.700"/></svg><div class="pt-[14px]">Bar chart</div></div>
            <div class="border-b border-[#e8e8e8]"><svg class="w-24 h-15" viewBox="0 0 96 60"><g stroke="#333"><rect x="26.500" y="33" width="9" height="25" fill="#fff"/><rect x="35.500" y="23" width="9.500" height="35" fill="#e5e5e5"/><rect x="53.500" y="31" width="9" height="27" fill="#fff"/><rect x="62.500" y="35" width="9" height="23" fill="#e5e5e5"/></g><path d="M22 19.500v39h53" fill="none" stroke="#000" stroke-width="1.900"/></svg><div class="pt-[14px]">Column Chart</div></div>
            <div class="border-r border-b border-[#e8e8e8]"><svg class="w-24 h-15" viewBox="0 0 96 60" fill="none"><path d="M25.300 56l12.400-8.300 3 3.700L69 30.400" stroke="#888"/><path d="M25.300 56L36.500 32l13 20.400 9.500-6.700L72.500 56" stroke="#222"/><path d="M24.500 19v39.500" stroke="#222" stroke-width="1.700"/></svg><div class="pt-[15px]">Line Chart</div></div>
            <div class="border-b border-[#e8e8e8]"><svg class="w-24 h-15" viewBox="0 0 96 60" stroke="#222"><circle cx="48" cy="38.700" r="19.700" fill="#fff"/><path d="M48 38.700L67.600 41A19.700 19.700 0 0 1 33.600 52z" fill="#dedede"/><path d="M48 38.700L33.600 52A19.700 19.700 0 0 1 48 19z" fill="#858585"/></svg><div class="pt-[15px]">Pie chart</div></div>
          </div>
          <div class="h-[21px] flex items-center justify-between pl-2 pr-[7px] text-[11px] text-[#0f6fe0]"><span>Legacy</span><svg class="w-2 h-2.5 mt-1"><use href="#chev-l"/></svg></div>
        </div>
        <div class="w-[15px] bg-[#f1f1f1] flex flex-col items-center"><svg class="w-[7px] h-1 mt-[7px]" viewBox="0 0 7 4"><path d="M0 4h7L3.500 0z" fill="#444"/></svg><div class="mt-[511px] w-[11px] h-[294px] bg-[#c1c1c1]"></div><svg class="w-[7px] h-1 mt-[5px]" viewBox="0 0 7 4"><path d="M0 0h7L3.500 4z" fill="#888"/></svg></div>
      </div>
      <div class="h-[45px] shrink-0 border-t border-[#ccc] pl-[5px] pt-[5px] text-[12px]">
        <div class="leading-4">Free plan: 151/300 objects</div>
        <div class="flex items-center"><div class="w-28 h-[7px] mb-px rounded-full border border-[#0069e5] overflow-hidden"><div class="h-full w-1/2 bg-[#0069e5]"></div></div><div class="ml-[15px] w-[55px] h-[19px] rounded-[2px] border border-[#0057bd] bg-[#0b6ce0] text-white text-[10px] leading-[17px] text-center">Upgrade</div></div>
      </div>
    </section>

    <!-- canvas -->
    <section class="w-[1336px] shrink-0 flex flex-col">
      <svg class="w-[1336px] h-[19px] shrink-0 bg-white" viewBox="324 164 1336 19" font-size="10.500" fill="#999">
        <defs><pattern id="tx" x="545" y="164" width="15" height="19" patternUnits="userSpaceOnUse"><path d="M.5 14v5" stroke="#bbb"/></pattern></defs>
        <rect x="343" y="164" width="1317" height="18" fill="url(#tx)"/>
        <path d="M324 182.500h1336M342.500 164v19M395.500 164v18M545.500 164v18M695.500 164v18M845.500 164v18M995.500 164v18M1145.500 164v18M1295.500 164v18M1445.500 164v18M1595.500 164v18" stroke="#c4c4c4"/>
        <text x="398" y="174" textLength="20">-100</text><text x="548" y="174">0</text><text x="698" y="174" textLength="17">100</text><text x="848" y="174" textLength="17">200</text><text x="998" y="174" textLength="17">300</text><text x="1148" y="174" textLength="17">400</text><text x="1298" y="174" textLength="17">500</text><text x="1448" y="174" textLength="17">600</text><text x="1598" y="174" textLength="17">700</text>
      </svg>
      <div class="flex flex-1 min-h-0">
        <svg class="w-[19px] h-[897px] shrink-0 bg-white" viewBox="324 183 19 897" font-size="10.500" fill="#999">
          <defs><pattern id="ty" x="324" y="270" width="19" height="15" patternUnits="userSpaceOnUse"><path d="M14 .5h5" stroke="#bbb"/></pattern></defs>
          <rect x="324" y="183" width="18" height="897" fill="url(#ty)"/>
          <path d="M342.500 183v897M324 270.500h18M324 420.500h18M324 570.500h18M324 720.500h18M324 870.500h18M324 1020.500h18" stroke="#c4c4c4"/>
          <text transform="translate(334 267) rotate(-90)" textLength="17">100</text><text transform="translate(334 417) rotate(-90)" textLength="17">200</text><text transform="translate(334 567) rotate(-90)" textLength="17">300</text><text transform="translate(334 717) rotate(-90)" textLength="17">400</text><text transform="translate(334 867) rotate(-90)" textLength="17">500</text><text transform="translate(334 1017) rotate(-90)" textLength="17">600</text>
        </svg>
        <div class="flex flex-col w-[1302px]">
          <svg class="w-[1302px] h-[882px]" viewBox="343 183 1302 882">
            <rect x="343" y="183" width="203" height="882" fill="#eee"/><rect x="546" y="183" width="1099" height="882" fill="#fff"/>
            <!-- browser frame -->
            <path d="M607.500 950V196q0-6 6-6H1546q6 0 6 6v754z" fill="#fff" stroke="#222" stroke-width="1.500"/>
            <path d="M607.500 279.500V196q0-6 6-6H1546q6 0 6 6v83.500z" fill="#e6e6e6" stroke="#222" stroke-width="1.500"/>
            <rect x="605" y="281" width="950" height="76" fill="#fff"/>
            <rect x="725.700" y="230.500" width="814.500" height="38.500" fill="#fff" stroke="#222" stroke-width="1.500"/>
            <text x="1050.500" y="218.300" font-size="18" textLength="66">Moqzilla</text>
            <text x="733" y="259" font-size="18" fill="#0f6fe8" textLength="148">http://moqups.com</text>
            <g fill="none" stroke="#130636" stroke-width="4.200" stroke-linecap="round"><path d="M641 249.500h-17M631.500 240.500l-9.500 9 9.500 9" stroke-linejoin="round"/><path d="M657 249.500h17M667 240.500l9.500 9-9.500 9" stroke-linejoin="round"/><path d="M705.500 256.500a8.500 8.500 0 1 1 4-8" stroke-width="3" stroke-linecap="butt"/></g><path d="M704 247.500h10l-5 7z" fill="#130636"/>
            <!-- page header -->
            <rect x="814" y="282" width="737.500" height="73.500" fill="#3e8af7"/>
            <text x="950" y="332.500" font-size="39" textLength="247">College Name</text>
            <text x="1383.500" y="327" font-size="21" textLength="40.500">year</text><text x="1486.800" y="327" font-size="21" textLength="52.500">name</text>
            <!-- drawer -->
            <rect x="608.500" y="280.800" width="206" height="669.200" fill="#3e8af7" stroke="#2a4570" stroke-width="1.200"/>
            <path d="M607.500 357v593" stroke="#222" stroke-width="1.500"/>
            <path d="M774.500 310.500l18 18M792.500 310.500l-18 18" stroke="#170b3b" stroke-width="2.500" stroke-linecap="round"/>
            <g font-size="31.500"><text x="633.600" y="407" textLength="154">Dashboard</text><text x="633.600" y="474" textLength="103.500">Targets</text><text x="633.600" y="541.500" fill="#fff" textLength="73.500">Tests</text><text x="633" y="602" fill="#130636" textLength="128.500">Meetings</text><text x="633" y="666" textLength="172">Notifications</text><text x="633" y="732" textLength="162">My account</text></g>
            <text x="1106" y="390" font-size="21" textLength="49">Tests</text><path d="M1106 392h49" stroke="#000" stroke-width="1.500"/>
            <!-- result cards -->
            <g fill="#fff" stroke="#111" stroke-width="1.500"><rect x="830.700" y="420.700" width="317" height="186"/><rect x="1198.200" y="420.700" width="317" height="186"/><rect x="832.200" y="675.700" width="317" height="186"/><rect x="1198.200" y="675.700" width="317" height="186"/></g>
            <g font-size="20.500"><text x="899" y="455.700" textLength="187">Science Test results</text><text x="1266.500" y="455.700" textLength="204.500">Science Test 2 results</text><text x="900.500" y="711" textLength="166">English test result</text><text x="1266.500" y="711" textLength="159">Maths Test result</text></g>
            <g fill="none" stroke-width="2.800"><path d="M903.500 489v93H1074.500" stroke="#000"/><path d="M904 581L945 489.500l48.500 77L1027 541l48 38.500" stroke="#000"/><path d="M904 581l39-52 21 42 95.500-81.500 15.500 18.500" stroke="#808080"/></g>
            <use href="#bars" x="1255" y="470" width="212" height="122"/><use href="#bars" x="1255" y="725" width="212" height="122"/><use href="#bars" x="889" y="725" width="212" height="122"/>
          </svg>
          <div class="h-[15px] bg-[#f1f1f1] flex items-center pl-[5px] pr-1.5"><svg class="w-1 h-[7px]" viewBox="0 0 4 7"><path d="M4 0v7L0 3.500z" fill="#444"/></svg><div class="ml-[293px] w-[476px] h-[11px] bg-[#c1c1c1]"></div><svg class="w-1 h-[7px] ml-auto" viewBox="0 0 4 7"><path d="M0 0v7l4-3.500z" fill="#444"/></svg></div>
        </div>
        <div class="w-[15px] bg-[#f1f1f1] flex flex-col items-center"><svg class="w-[7px] h-1 mt-1.5" viewBox="0 0 7 4"><path d="M0 4h7L3.500 0z" fill="#444"/></svg><div class="mt-[224px] w-[11px] h-[264px] bg-[#a8a8a8]"></div><svg class="w-[7px] h-1 mt-auto mb-5" viewBox="0 0 7 4"><path d="M0 0h7L3.500 4z" fill="#444"/></svg></div>
      </div>
    </section>

    <!-- styles panel -->
    <aside class="w-[260px] border-l border-[#ccc] bg-[#f4f4f4] text-[12px] text-[#999]">
      <svg class="w-full h-[30px] border-b border-[#e2e2e2]" viewBox="1661 164 259 29"><g fill="#999"><path d="M1670 172h1.500v13h-1.500zM1673 179h10v5h-10zM1704 179h12v5h-12zM1736 179h12v5h-12zM1748 172h1.500v13h-1.500zM1769 174h5v11h-5zM1768 172h12v1.500h-12zM1803 173h4v12h-4zM1801 178h12v1.500h-12zM1834 173h5v11h-5zM1833 184.500h12v1.200h-12zM1866 174h4v9h-4zM1867.500 172h1v13h-1zM1897 180h11v4h-11zM1896 184.800h13v1h-13z"/></g><g fill="#ccc"><path d="M1673 174h5v4h-5zM1707 174h6v4h-6zM1709.500 172h1v14h-1zM1742 174h5v4h-5zM1775 174h4v5h-4zM1808 176h4v6h-4zM1840 178h4v6h-4zM1873 174h4v9h-4zM1874.500 172h1v13h-1zM1898 175h9v3h-9zM1896 172.500h13v1h-13z"/></g></svg>
      <div class="h-[23px] bg-white border-b border-[#d8d8d8] pl-[10px] text-[11px] leading-[21px] text-[#444] -mt-[1px] pt-px"><span data-w="85.500">DEFAULT STYLES</span></div>
      <div class="h-[121px] px-[13px] pt-[14px]"><div class="h-[94px] bg-white pl-[13px] pt-[12px] leading-4 text-[#666] whitespace-nowrap"><div class="font-bold"><span data-w="172">You’re in Default Styles mode.</span></div><div><span data-w="200">Any style you pick now will be applied</span></div><div><span data-w="205">to all new objects you add to the page.</span></div><div class="mt-1.5 text-[#0f6fe8]"><span data-w="102">Clear default styles</span></div></div></div>
      <div class="h-[25px] bg-white border-y border-[#d8d8d8] pl-[10px] text-[11px] leading-[22px] text-[#444]"><span data-w="25">TEXT</span></div>
      <div class="h-[173px] px-[13px] pt-[13px]">
        <div class="flex justify-between mb-1.5">
          <div class="w-[147px] h-[26px] border border-[#b8b8b8] rounded-[3px] bg-white flex items-center text-[13px]"><span class="pl-[5px] flex-1"><span data-w="64">Font family</span></span><i class="w-[21px] h-full border-l border-[#b8b8b8] grid place-items-center"><svg class="w-[7px] h-2"><use href="#caret"/></svg></i></div>
          <div class="w-20 h-[26px] border border-[#b8b8b8] rounded-[3px] bg-white flex items-center text-[10.500px]"><span class="pl-1 flex-1">None</span><i class="w-[21px] h-full border-l border-[#b8b8b8] grid place-items-center"><svg class="w-[7px] h-2"><use href="#caret"/></svg></i></div>
        </div>
        <div class="flex justify-between mb-[7px]">
          <div class="w-[126px] h-[25px] border border-[#b8b8b8] rounded-[3px] bg-white flex items-center p-px"><span class="w-[22px] flex flex-col items-center leading-[13px] text-[11px] text-[#888] font-bold">A<b class="w-[13px] h-0.5 bg-[#b5afaf]"></b></span><span class="flex-1 h-full border border-[#ccc] grid place-items-center text-[10px] font-bold">?</span></div>
          <div class="w-[100px] h-[25px] border border-[#b8b8b8] rounded-[3px] bg-white flex items-center"><span class="pl-1 flex-1 font-bold text-[#666]"><span class="text-[8px]">T</span><span class="text-[12px] -ml-px">T</span></span><span class="text-[8px] text-[#ccc] pr-[7px]">PX</span><i class="w-[21px] h-full border-l border-[#b8b8b8] grid place-items-center"><svg class="w-[7px] h-2"><use href="#caret"/></svg></i></div>
        </div>
        <div class="flex mb-1.5">
          <div class="w-[73px] h-[25px] border border-[#b8b8b8] rounded-[3px] bg-white flex items-center"><span class="flex-1 pl-1"><svg class="w-3 h-3" viewBox="0 0 12 12"><path d="M2 1v10M0 3l2-2 2 2M0 9l2 2 2-2M5 2h7M5 6h7M5 10h7" stroke="#777" fill="none"/></svg></span><i class="w-[21px] h-full border-l border-[#b8b8b8] grid place-items-center"><svg class="w-[7px] h-2"><use href="#caret"/></svg></i></div>
          <div class="ml-[7px] w-[73px] h-[25px] border border-[#b8b8b8] rounded-[3px] bg-white flex items-center justify-between px-1"><span class="text-[8px] leading-[9px] font-bold text-[#666] flex flex-col items-center">AV<svg class="w-[13px] h-1.5" viewBox="0 0 13 6"><path d="M1 3h11M3 1L1 3l2 2M10 1l2 2-2 2" stroke="#888" fill="none"/></svg></span><span class="text-[8px] text-[#ccc] pr-1">PX</span></div>
          <div class="ml-[7px] w-[65px] h-[23px] border border-[#ccc] rounded-[3px] grid grid-cols-2 text-[12px] leading-[21px] font-bold text-[#333] text-center"><span class="border-r border-[#ccc] tracking-wide">AA</span><span>A<span class="text-[9px]">A</span></span></div>
        </div>
        <div class="w-[230px] h-[23px] mb-1.5 border border-[#ccc] rounded-[3px] grid grid-cols-4 divide-x divide-[#ccc] text-center text-[11px] leading-[21px] text-[#333] font-bold"><span>B</span><span class="italic font-['Liberation_Mono',monospace]">I</span><span class="underline font-normal">U</span><span class="grid place-items-center"><svg class="w-3 h-2.5" viewBox="0 0 12 10"><path d="M3 1h6M6 1v2.500M1 5h10M6 7v2.500" stroke="#333" stroke-width="1.700"/></svg></span></div>
        <div class="w-[230px] h-[23px] border border-[#ccc] rounded-[3px] grid grid-cols-4 divide-x divide-[#ccc] place-items-stretch">
          <span class="grid place-items-center"><svg class="w-3 h-3" viewBox="0 0 12 12"><path d="M0 1h11M0 3.500h7M0 6h11M0 8.500h7M0 11h11" stroke="#333" stroke-width="1.200"/></svg></span>
          <span class="grid place-items-center"><svg class="w-3 h-3" viewBox="0 0 12 12"><path d="M1 1h10M3 3.500h6M1 6h10M3 8.500h6M1 11h10" stroke="#333" stroke-width="1.200"/></svg></span>
          <span class="grid place-items-center"><svg class="w-3 h-3" viewBox="0 0 12 12"><path d="M1 1h11M5 3.500h7M1 6h11M5 8.500h7M1 11h11" stroke="#333" stroke-width="1.200"/></svg></span>
          <span class="grid place-items-center"><svg class="w-3 h-3" viewBox="0 0 12 12"><path d="M0 1h12M0 3.500h12M0 6h12M0 8.500h12M0 11h12" stroke="#333" stroke-width="1.200"/></svg></span>
        </div>
      </div>
      <div class="h-[24px] bg-white border-y border-[#d8d8d8] pl-[10px] text-[11px] leading-[22px] text-[#444]"><span data-w="86.500">FILLS &amp; STROKES</span></div>
      <div class="h-[114px] px-[13px] pt-[13px]">
        <div class="h-[25px] mb-1.5 border border-[#b8b8b8] rounded-[3px] bg-white flex items-center p-px gap-px"><svg class="w-[21px] h-full" viewBox="0 0 21 21"><path d="M6 10l5-5 5 5-5 5zM9 3l2 2" fill="#fff" stroke="#777" stroke-width="1.500"/><path d="M6 10h10l-5 5z" fill="#777"/><circle cx="17" cy="14" r="1.300" fill="#777"/><path d="M4 18h13" stroke="#b5afaf" stroke-width="2"/></svg><span class="flex-1 h-full border border-[#ccc] grid place-items-center text-[10px] font-bold">?</span><span class="flex-1 h-full border border-[#ccc] grid place-items-center text-[10px] font-bold">?</span></div>
        <div class="h-[25px] mb-[7px] border border-[#b8b8b8] rounded-[3px] bg-white flex items-center p-px"><svg class="w-[22px] h-full" viewBox="0 0 21 21"><path d="M7 13l7-7M15 5l1-1" stroke="#777" stroke-width="3"/><path d="M5 15l1-3 2 2z" fill="#777"/><path d="M4 18h13" stroke="#b5afaf" stroke-width="2"/></svg><span class="flex-1 h-full border border-[#ccc] grid place-items-center text-[10px] font-bold">?</span></div>
        <div class="flex justify-between">
          <div class="w-[113px] h-[25px] border border-[#b8b8b8] rounded-[3px] bg-white flex items-center"><svg class="ml-1 w-3 h-1" viewBox="0 0 12 4"><path d="M0 2.500h1.500V4H0zM2.500 1.500h2V4h-2zM5.500 1h2.500v3H5.500zM9 0h3v4H9z" fill="#777"/></svg><span class="pl-1 flex-1 text-[13px] text-black">0</span><span class="text-[8px] text-[#ccc] pr-[7px]">PT</span><i class="w-[21px] h-full border-l border-[#b8b8b8] grid place-items-center"><svg class="w-[7px] h-2"><use href="#caret"/></svg></i></div>
          <div class="w-[113px] h-[25px] border border-[#b8b8b8] rounded-[3px] bg-white flex items-center text-[13px]"><svg class="ml-1 w-3 h-2.5" viewBox="0 0 12 10"><path d="M0 1h12" stroke="#888" stroke-width="2"/><path d="M0 4h12" stroke="#888"/><path d="M0 6.500h12M0 9h12" stroke="#aaa" stroke-dasharray="1.500 1"/></svg><span class="pl-1 flex-1"><span data-w="29">Solid</span></span><i class="w-[21px] h-full border-l border-[#b8b8b8] grid place-items-center"><svg class="w-[7px] h-2"><use href="#caret"/></svg></i></div>
        </div>
      </div>
      <div class="h-[23px] bg-[#ededed] border-t border-[#d8d8d8] pl-[10px] pr-[11px] flex justify-between text-[11px] leading-[22px] text-[#777]"><span><span data-w="103">ROUNDED CORNERS</span></span><span>[+]</span></div>
      <div class="h-[25px] bg-white border-y border-[#d8d8d8] pl-[10px] text-[11px] leading-[22px] text-[#444]"><span data-w="71">CONNECTORS</span></div>
      <div class="h-[115px] px-[13px] pt-[13px] border-b border-[#d8d8d8]">
        <div class="h-[25px] mb-1.5 border border-[#b8b8b8] rounded-[3px] bg-white flex items-center p-px"><svg class="w-[22px] h-full" viewBox="0 0 21 21"><path d="M7 13l7-7M15 5l1-1" stroke="#777" stroke-width="3"/><path d="M5 15l1-3 2 2z" fill="#777"/><path d="M4 18h13" stroke="#b5afaf" stroke-width="2"/></svg><span class="flex-1 h-full border border-[#ccc] grid place-items-center text-[10px] font-bold">?</span></div>
        <div class="flex justify-between mb-[7px]">
          <div class="w-[113px] h-[25px] border border-[#b8b8b8] rounded-[3px] bg-white flex items-center"><svg class="ml-1 w-3 h-1" viewBox="0 0 12 4"><path d="M0 2.500h1.500V4H0zM2.500 1.500h2V4h-2zM5.500 1h2.500v3H5.500zM9 0h3v4H9z" fill="#777"/></svg><span class="flex-1"></span><span class="text-[8px] text-[#ccc] pr-[7px]">PT</span><i class="w-[21px] h-full border-l border-[#b8b8b8] grid place-items-center"><svg class="w-[7px] h-2"><use href="#caret"/></svg></i></div>
          <div class="w-[113px] h-[25px] border border-[#b8b8b8] rounded-[3px] bg-white flex items-center text-[13px]"><svg class="ml-1 w-3 h-2.5" viewBox="0 0 12 10"><path d="M0 1h12" stroke="#888" stroke-width="2"/><path d="M0 4h12" stroke="#888"/><path d="M0 6.500h12M0 9h12" stroke="#aaa" stroke-dasharray="1.500 1"/></svg><span class="pl-1 flex-1"><span data-w="29">Solid</span></span><i class="w-[21px] h-full border-l border-[#b8b8b8] grid place-items-center"><svg class="w-[7px] h-2"><use href="#caret"/></svg></i></div>
        </div>
        <div class="flex justify-between text-[13px]">
          <div class="w-[73px] h-[25px] border border-[#b8b8b8] rounded-[3px] bg-white flex items-center"><span class="pl-[5px] flex-1"><span data-w="29">Style</span></span><i class="w-[21px] h-full border-l border-[#b8b8b8] grid place-items-center"><svg class="w-[7px] h-2"><use href="#caret"/></svg></i></div>
          <div class="w-[73px] h-[25px] border border-[#b8b8b8] rounded-[3px] bg-white flex items-center"><span class="pl-[5px] flex-1"><span data-w="27">Start</span></span><i class="w-[21px] h-full border-l border-[#b8b8b8] grid place-items-center"><svg class="w-[7px] h-2"><use href="#caret"/></svg></i></div>
          <div class="w-[73px] h-[25px] border border-[#b8b8b8] rounded-[3px] bg-white flex items-center"><span class="pl-[5px] flex-1"><span data-w="23">End</span></span><i class="w-[21px] h-full border-l border-[#b8b8b8] grid place-items-center"><svg class="w-[7px] h-2"><use href="#caret"/></svg></i></div>
        </div>
      </div>
    </aside>
  </div>
</main>
</div>

<script>
  // tabs: icon, title, title width
  const small = ['i-slack', 'i-page'];
  const tabs = [
    ['i-outlook', 'Mail - Adam Ali - Ou', 126], ['i-cloud', 'Documents - OneD', 126],
    ['i-google', 'college tracking sy', 126], ['i-codewars', 'adam-ali | Codewar', 126],
    ['i-moqups', 'student Tracker - Te', 127], ['i-bbc', 'BBC Sport - Footba', 126],
    ['i-google', 'student tracking sy', 127], ['i-facebook', 'Facebook', 64], ['i-google', 'Google', 49]
  ];
  document.getElementById('tabs').innerHTML =
    small.map((icon, i) => `<div class="relative shrink-0 w-[37.500px] h-7 flex items-center justify-center pl-[14px]"><svg class="absolute left-0 top-0 w-[53px] h-[29px]" viewBox="0 0 53 29"><path d="M0 28.500L12 1q1-.8 2-.8h22q1.500 0 2 .8l13 27.500" fill="#3f3f3f" stroke="#808080" stroke-width="1.200"/></svg><svg class="relative w-4 h-4"><use href="#${icon}"/></svg></div>`).join('') +
    '<div class="w-[7px] shrink-0"></div>' +
    tabs.map(([icon, title, w], i) => `<div class="${i === 4 ? 'z-10' : ''} relative shrink-0 w-[187.300px] h-7 flex items-center pl-[16px]"><svg class="absolute left-0 top-0 w-[200px] h-[29px]" viewBox="0 0 200 29"><path d="M0 28.500L11 1.500q.5-1 2-1h172q1.500 0 2 1l12 27" fill="${i === 4 ? '#575757' : '#3f3f3f'}" stroke="#808080" stroke-width="1.200"/>${i === 4 ? '' : '<path d="M0 28.300h199" stroke="#808080"/>'}</svg><svg class="relative w-4 h-4 shrink-0"><use href="#${icon}"/></svg><div class="relative ml-[6px] w-[129px] whitespace-nowrap ${w > 100 ? 'mask-r-from-75%' : ''} ${i === 4 ? 'text-[#e8e8e8]' : ''}"><span data-w="${w}">${title}</span></div><svg class="relative w-2 h-2 ml-[7px]" viewBox="0 0 8 8"><path d="M.5.500l7 7M7.500.500l-7 7" stroke="#b0b0b0" stroke-width="1.500"/></svg></div>`).join('') +
    '<svg class="w-[80px] h-7 shrink-0 ml-px" viewBox="1840 24 80 28"><path d="M1849 32q0-1 1-1h24q1.500 0 2 1l6 15q0 1.500-1 1.500h-24q-1.500 0-2-1z" fill="#4a4a4a" stroke="#888"/><path d="M1890.500 25v15q0 3 3 3h18q3 0 3-3V25" fill="#202428" stroke="#777"/><circle cx="1902" cy="31.500" r="2.500" fill="#ccc"/><path d="M1897.500 38q0-3 4.500-3.500 4.500.500 4.500 3.500z" fill="#ccc"/></svg>';

  // bookmarks: icon, label, label width, slot width
  const marks = [
    ['i-apps', 'Apps', 34, 67], ['i-codewars', 'Codewars', 67, 101], ['i-ms', '', 0, 27], ['i-cloud', '', 0, 29],
    ['i-hr', 'HackerRank', 81, 115], ['i-google', 'Google', 48, 82], ['i-github', '', 0, 28], ['i-reddit', '', 0, 28],
    ['i-yt', '', 0, 28], ['i-bbc', '', 0, 28], ['i-trello', 'Trello', 38, 71], ['i-pl', '', 0, 28],
    ['i-devdocs', 'DevDocs', 60, 94], ['i-npm', 'npm', 29, 65], ['i-floo', 'Floobits', 55, 87], ['i-rain', "'this' keyword", 94, 133],
    ['i-react', 'React Europe', 91, 127], ['i-reddit', 'skills must have a', 116, 150], ['i-codepen', 'CodePen', 60, 97],
    ['i-red2', 'Start your career', 113, 151], ['i-cb', 'Coderbyte', 71, 103], ['i-none', 'WhichFont', 75, 170]
  ];
  document.getElementById('bookmarks').innerHTML = marks.map(([icon, t, w, slot]) =>
    `<div class="shrink-0 flex items-center" style="width:${slot}px"><svg class="w-4 h-4 mr-[5px] shrink-0"><use href="#${icon}"/></svg><div class="whitespace-nowrap ${w > 100 ? 'mask-r-from-80%' : ''}"><span data-w="${w}">${t}</span></div></div>`).join('') + '<span class="text-[18px]">»</span>';

  document.getElementById('groups').innerHTML = ['Flowchart Diagrams', 'Spec Tools', 'iOS Components', 'Material Design', 'Bootstrap'].map(g =>
    `<div class="h-[22.500px] border-b border-[#e8e8e8] flex items-center justify-between pl-2 pr-[7px] text-[11px] text-[#0f6fe0]"><span>${g}</span><svg class="w-2 h-2.5 mt-0.5"><use href="#chev-l"/></svg></div>`).join('');

  // spread letters so that each label fills its slot
  function fit() {
    document.querySelectorAll('[data-w]').forEach(el => {
      const n = el.textContent.length;
      if (!n) return;
      el.style.letterSpacing = '0px';
      el.style.letterSpacing = (el.dataset.w - el.getBoundingClientRect().width) / n + 'px';
    });
  }
  fit();
  addEventListener('load', () => { fit(); requestAnimationFrame(fit); setTimeout(fit, 50); });
  document.fonts.ready.then(fit);
</script>
</body>
</html>
